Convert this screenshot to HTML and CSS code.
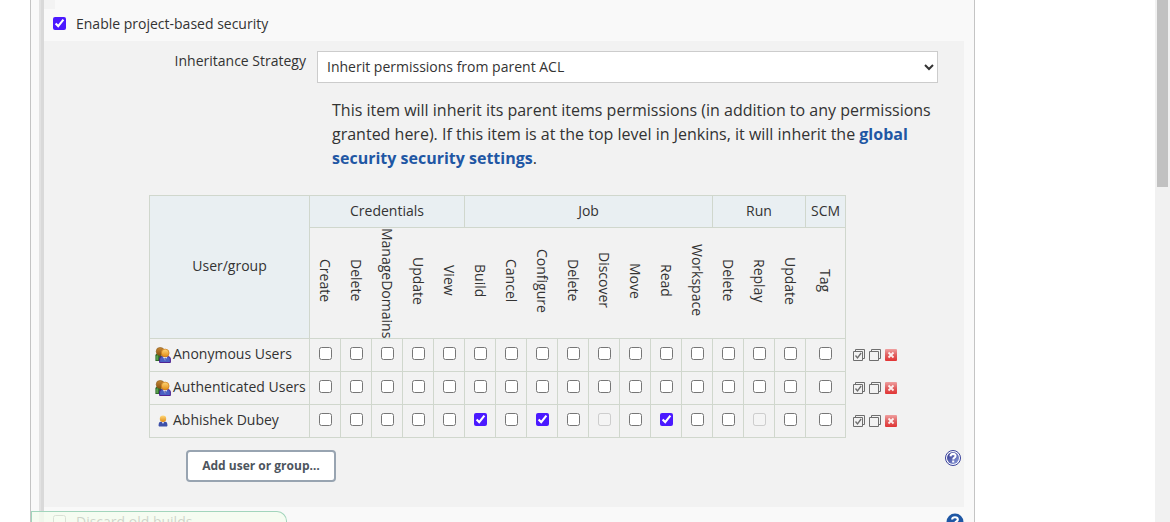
FILE: index.html
```html
<!DOCTYPE html>
<html lang="en">
<head>
<meta charset="utf-8">
<title>Project configuration</title>
<link rel="stylesheet" href="styles.css">
</head>
<body>
<svg class="sprite" aria-hidden="true">
  <defs>
    <linearGradient id="gold" x1="0" y1="0" x2="0" y2="1"><stop offset="0" stop-color="#ffd87a"/><stop offset="1" stop-color="#e08a14"/></linearGradient>
    <linearGradient id="brown" x1="0" y1="0" x2="0" y2="1"><stop offset="0" stop-color="#c98a35"/><stop offset="1" stop-color="#8a5212"/></linearGradient>
    <linearGradient id="red" x1="0" y1="0" x2="0" y2="1"><stop offset="0" stop-color="#f0a0a0"/><stop offset=".5" stop-color="#e06060"/><stop offset="1" stop-color="#e23434"/></linearGradient>
    <linearGradient id="navy" x1="0" y1="0" x2="1" y2="1"><stop offset="0" stop-color="#2b2f8c"/><stop offset="1" stop-color="#8fa0dc"/></linearGradient>
  </defs>
  <symbol id="group" viewBox="0 0 16 16">
    <path d="M.4 14V8.500q0-2 3-2h3V14z" fill="#2f6b2b"/>
    <path d="M1.200 13V9l2-1v5z" fill="#5aa04e"/>
    <circle cx="5.200" cy="4.400" r="4" fill="url(#brown)" stroke="#8a5a1c" stroke-width=".6"/>
    <path d="M4.600 15.500V12q0-2.600 2.800-2.600h5.200q2.800 0 2.800 2.600v3.500z" fill="#4a60c4" stroke="#46148a" stroke-width=".9"/>
    <path d="M7.800 9.600l2.300 4.200 2.300-4.200z" fill="#f1f3ff"/>
    <path d="M10.100 10.400l.8 1.300-.8 2-.8-2z" fill="#2c3a94"/>
    <circle cx="10.200" cy="6" r="3.900" fill="url(#gold)" stroke="#cc7a18" stroke-width=".7"/>
  </symbol>
  <symbol id="person" viewBox="0 0 16 16">
    <path d="M3.600 12.400q-.2-3.400 2.200-3.700h4.400q2.400.3 2.200 3.700-.1 1.200-1.400 1.200H5q-1.300 0-1.400-1.200z" fill="#3d50a8"/>
    <path d="M6.800 8.800l1.200 2.200 1.200-2.200z" fill="#e8ecff"/>
    <circle cx="8" cy="5.800" r="3.200" fill="url(#gold)"/>
  </symbol>
  <symbol id="check-all" viewBox="0 0 12 12">
    <path d="M2.500 2.500v-2h9v9h-2M.5 2.500h9v9h-9z" fill="none" stroke="#6e6e6e"/>
    <path d="M2.500 6.500l2 2.500 3.600-5" fill="none" stroke="#6e6e6e" stroke-width="1.300"/>
  </symbol>
  <symbol id="check-none" viewBox="0 0 12 12">
    <path d="M2.500 2.500v-2h9v9h-2M.5 2.500h9v9h-9z" fill="none" stroke="#6e6e6e"/>
  </symbol>
  <symbol id="remove" viewBox="0 0 12 12">
    <rect width="12" height="12" rx="1" fill="url(#red)"/>
    <path d="M3.500 3.500l5 5M8.500 3.500l-5 5" stroke="#fff" stroke-opacity=".9" stroke-width="1.800"/>
  </symbol>
  <symbol id="help-ring" viewBox="0 0 16 16">
    <circle cx="8" cy="8" r="7.500" fill="#fff" stroke="#38409a"/>
    <circle cx="8" cy="8" r="6" fill="url(#navy)"/>
    <path d="M5.500 6.400q.1-2.500 2.600-2.500 2.500.1 2.400 2.100 0 1.200-1.300 1.900-.9.500-.9 1.500M8.200 10.500v1.900" fill="none" stroke="#fff" stroke-width="2.100"/>
  </symbol>
  <symbol id="help-solid" viewBox="0 0 18 18">
    <circle cx="9" cy="9" r="8.500" fill="#1f57a4"/>
    <path d="M6.100 6.500q.2-2.300 2.900-2.300t2.800 2.200q0 1.300-1.400 2-1.300.7-1.300 1.900M9.100 12v2" fill="none" stroke="#fff" stroke-width="2.100"/>
  </symbol>
</svg>

<div class="page">
  <main class="content">
    <form class="panel">
      <div class="rail"></div>
      <div class="options">
        <div class="first">
          <div class="drag-area"></div>
          <label class="option"><input type="checkbox" checked><span>Enable project-based security</span></label>
        </div>

        <section class="security">
          <div class="strategy">
            <label class="strategy-label" for="strategy">Inheritance Strategy</label>
            <select id="strategy" class="strategy-select"><option>Inherit permissions from parent ACL</option></select>
          </div>
          <p class="note">This item will inherit its parent items permissions (in addition to any permissions granted here). If this item is at the top level in Jenkins, it will inherit the <a href="#">global security security settings</a>.</p>

          <table class="matrix">
            <colgroup><col class="col-user"><col class="col-perm" span="16"><col class="col-tag"><col class="col-actions"></colgroup>
            <thead>
              <tr class="groups">
                <th rowspan="2">User/group</th>
                <th colspan="5">Credentials</th><th colspan="8">Job</th><th colspan="3">Run</th><th>SCM</th>
                <td class="actions" rowspan="2"></td>
              </tr>
              <tr class="perms">
                <th><span>Create</span></th><th><span>Delete</span></th><th><span>ManageDomains</span></th><th><span>Update</span></th><th><span>View</span></th>
                <th><span>Build</span></th><th><span>Cancel</span></th><th><span>Configure</span></th><th><span>Delete</span></th><th><span>Discover</span></th><th><span>Move</span></th><th><span>Read</span></th><th><span>Workspace</span></th>
                <th><span>Delete</span></th><th><span>Replay</span></th><th><span>Update</span></th><th><span>Tag</span></th>
              </tr>
            </thead>
            <tbody>
              <tr>
                <td class="user"><div class="user-name"><svg class="icon"><use href="#group"/></svg><span>Anonymous Users</span></div></td>
                <td><input type="checkbox" aria-label="Credentials Create"></td><td><input type="checkbox" aria-label="Credentials Delete"></td><td><input type="checkbox" aria-label="Credentials ManageDomains"></td><td><input type="checkbox" aria-label="Credentials Update"></td><td><input type="checkbox" aria-label="Credentials View"></td>
                <td><input type="checkbox" aria-label="Job Build"></td><td><input type="checkbox" aria-label="Job Cancel"></td><td><input type="checkbox" aria-label="Job Configure"></td><td><input type="checkbox" aria-label="Job Delete"></td><td><input type="checkbox" aria-label="Job Discover"></td><td><input type="checkbox" aria-label="Job Move"></td><td><input type="checkbox" aria-label="Job Read"></td><td><input type="checkbox" aria-label="Job Workspace"></td>
                <td><input type="checkbox" aria-label="Run Delete"></td><td><input type="checkbox" aria-label="Run Replay"></td><td><input type="checkbox" aria-label="Run Update"></td><td><input type="checkbox" aria-label="SCM Tag"></td>
                <td class="actions"><div class="tools"><button type="button" aria-label="Select all"><svg><use href="#check-all"/></svg></button><button type="button" aria-label="Unselect all"><svg><use href="#check-none"/></svg></button><button type="button" aria-label="Remove"><svg><use href="#remove"/></svg></button></div></td>
              </tr>
              <tr>
                <td class="user"><div class="user-name"><svg class="icon"><use href="#group"/></svg><span>Authenticated Users</span></div></td>
                <td><input type="checkbox" aria-label="Credentials Create"></td><td><input type="checkbox" aria-label="Credentials Delete"></td><td><input type="checkbox" aria-label="Credentials ManageDomains"></td><td><input type="checkbox" aria-label="Credentials Update"></td><td><input type="checkbox" aria-label="Credentials View"></td>
                <td><input type="checkbox" aria-label="Job Build"></td><td><input type="checkbox" aria-label="Job Cancel"></td><td><input type="checkbox" aria-label="Job Configure"></td><td><input type="checkbox" aria-label="Job Delete"></td><td><input type="checkbox" aria-label="Job Discover"></td><td><input type="checkbox" aria-label="Job Move"></td><td><input type="checkbox" aria-label="Job Read"></td><td><input type="checkbox" aria-label="Job Workspace"></td>
                <td><input type="checkbox" aria-label="Run Delete"></td><td><input type="checkbox" aria-label="Run Replay"></td><td><input type="checkbox" aria-label="Run Update"></td><td><input type="checkbox" aria-label="SCM Tag"></td>
                <td class="actions"><div class="tools"><button type="button" aria-label="Select all"><svg><use href="#check-all"/></svg></button><button type="button" aria-label="Unselect all"><svg><use href="#check-none"/></svg></button><button type="button" aria-label="Remove"><svg><use href="#remove"/></svg></button></div></td>
              </tr>
              <tr>
                <td class="user"><div class="user-name"><svg class="icon"><use href="#person"/></svg><span>Abhishek Dubey</span></div></td>
                <td><input type="checkbox" aria-label="Credentials Create"></td><td><input type="checkbox" aria-label="Credentials Delete"></td><td><input type="checkbox" aria-label="Credentials ManageDomains"></td><td><input type="checkbox" aria-label="Credentials Update"></td><td><input type="checkbox" aria-label="Credentials View"></td>
                <td><input type="checkbox" aria-label="Job Build" checked></td><td><input type="checkbox" aria-label="Job Cancel"></td><td><input type="checkbox" aria-label="Job Configure" checked></td><td><input type="checkbox" aria-label="Job Delete"></td><td><input type="checkbox" aria-label="Job Discover" disabled></td><td><input type="checkbox" aria-label="Job Move"></td><td><input type="checkbox" aria-label="Job Read" checked></td><td><input type="checkbox" aria-label="Job Workspace"></td>
                <td><input type="checkbox" aria-label="Run Delete"></td><td><input type="checkbox" aria-label="Run Replay" disabled></td><td><input type="checkbox" aria-label="Run Update"></td><td><input type="checkbox" aria-label="SCM Tag"></td>
                <td class="actions"><div class="tools"><button type="button" aria-label="Select all"><svg><use href="#check-all"/></svg></button><button type="button" aria-label="Unselect all"><svg><use href="#check-none"/></svg></button><button type="button" aria-label="Remove"><svg><use href="#remove"/></svg></button></div></td>
              </tr>
            </tbody>
          </table>

          <div class="add-row">
            <button type="button" class="add">Add user or group…</button>
            <button type="button" class="help" aria-label="Help"><svg><use href="#help-ring"/></svg></button>
          </div>
        </section>

        <div class="next">
          <label class="option"><input type="checkbox"><span>Discard old builds</span></label>
          <button type="button" class="help help-large" aria-label="Help"><svg><use href="#help-solid"/></svg></button>
        </div>
      </div>
      <div class="save-bar"></div>
    </form>
  </main>
  <div class="scrollbar"><div class="thumb"></div></div>
</div>
</body>
</html>
```
FILE: styles.css
```css
* { box-sizing: border-box; }

body {
  margin: 0;
  background: #fff;
  color: #333;
  font: 14px/20px "Open Sans", "Noto Sans", sans-serif;
}

button { padding: 0; border: 0; background: none; font: inherit; color: inherit; }
svg { display: block; width: 100%; height: 100%; }
input { width: 13px; height: 13px; margin: 0; accent-color: #4b19ff; }

.sprite { position: absolute; width: 0; height: 0; }

.page { display: flex; height: 100vh; overflow: hidden; }
.content { display: flex; flex: 1; padding: 0 180px 0 30px; }

.panel {
  position: relative;
  display: flex;
  flex: 1;
  padding: 0 10px 0 8px;
  overflow: hidden;
  background: #f9f9f9;
  border: solid #c4c4c4;
  border-width: 0 1px;
}

.rail { width: 5px; background: #d9d9d9; border-left: 2px solid #e2e2e2; }
.options { flex: 1; }

.option { display: flex; align-items: center; gap: 10px; height: 30px; padding-left: 9px; }
.option input { margin-bottom: 2px; }
.first { height: 41px; }
.drag-area { width: 11px; height: 9px; background: #f3f3f3; }

.security { padding: 10px 0 25px; background: #f2f2f2; }

.strategy { display: flex; gap: 11px; padding-right: 26px; }
.strategy-label { width: 262px; text-align: right; }
.strategy-select {
  flex: 1;
  height: 32px;
  padding: 0 5px 1px;
  background: #fff;
  border: 1px solid #ccc;
  border-radius: 0;
  color: #333;
  font: inherit;
}

.note { margin: 15px 26px 25px 288px; font-size: 16px; line-height: 24px; }
.note a { color: #1f57a4; font-weight: 700; text-decoration: none; }

.matrix { width: 752px; margin-left: 105px; table-layout: fixed; border-collapse: collapse; }
.col-user { width: 160px; }
.col-perm { width: 31px; }
.col-tag { width: 40px; }
.col-actions { width: 56px; }
.matrix th, .matrix td { padding: 0; border: 1px solid #d0d7cd; text-align: center; font-weight: 400; }
.matrix input { display: block; margin: 0 auto 3px; }
.groups { height: 32px; }
.matrix .groups th { padding-bottom: 2px; background: #e9eff2; }
.perms { height: 111px; }
.matrix .perms th { padding-bottom: 5px; border-left: 0; border-right: 0; }
.matrix .perms th:last-child { border-right: 1px solid #d0d7cd; }
.perms span { display: inline-block; height: 105px; line-height: 20px; writing-mode: vertical-rl; vertical-align: top; }
.matrix tbody tr { height: 33px; }
.matrix .actions { border: 0; padding-left: 7px; }
.user-name { display: flex; align-items: center; gap: 2px; height: 30px; padding-left: 5px; white-space: nowrap; }
.user-name span { padding-bottom: 2px; }
.icon { flex: none; width: 16px; height: 16px; }
.tools { display: flex; gap: 4px; }
.tools button { width: 12px; height: 12px; }

.add-row { display: flex; justify-content: space-between; align-items: flex-start; padding: 12px 3px 0 142px; }
.add {
  height: 32px;
  width: 150px;
  background: #fff;
  border: 2px solid #98a4b1;
  border-radius: 4px;
  color: #4d545d;
  font-size: 12px;
  font-weight: 700;
}
.help { width: 16px; height: 16px; }

.next { display: flex; justify-content: space-between; align-items: flex-start; }
.help-large { width: 18px; height: 18px; margin-top: 6px; }

.save-bar {
  position: absolute;
  left: 0;
  bottom: 0;
  width: 256px;
  height: 11px;
  background: rgba(244, 253, 239, .8);
  border: solid #a2d5bc;
  border-width: 1px 1px 0;
  border-top-right-radius: 10px;
}

.scrollbar { width: 15px; padding: 0 2px; background: #f1f1f1; }
.thumb { height: 187px; background: #c1c1c1; }
```
